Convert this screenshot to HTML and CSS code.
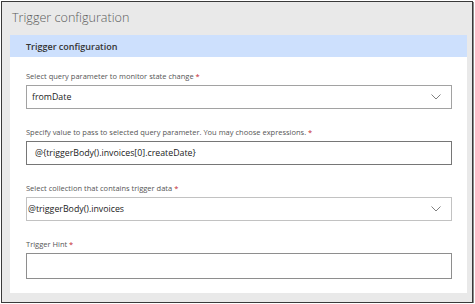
FILE: index.html
```html
<!DOCTYPE html>
<html lang="en">

<head>
  <meta charset="UTF-8" />
  <meta name="viewport" content="width=device-width, initial-scale=1.0" />
  <link rel="stylesheet" href="styles.css">
  <title>Trigger configuration</title>
</head>

<body>
  <div class="frame">
    <div class="frame-title">Trigger configuration</div>

    <div class="panel">
      <div class="panel-header">Trigger configuration</div>

      <div class="panel-body">
        <div class="field">
          <label class="label">Select query parameter to monitor state change <span class="req">*</span></label>
          <div class="input select">
            <span class="value">fromDate</span>
            <svg class="chevron" viewBox="0 0 10 6" width="10" height="6">
              <path d="M0.5 0.5 L5 5 L9.5 0.5" fill="none" stroke="#808080" stroke-width="1"></path>
            </svg>
          </div>
        </div>

        <div class="field">
          <label class="label">Specify value to pass to selected query parameter. You may choose expressions. <span class="req">*</span></label>
          <div class="input active">
            <span class="value expr">@{triggerBody().invoices[0].createDate}</span>
          </div>
        </div>

        <div class="field">
          <label class="label">Select collection that contains trigger data <span class="req">*</span></label>
          <div class="input select light">
            <span class="value">@triggerBody().invoices</span>
            <svg class="chevron" viewBox="0 0 10 6" width="10" height="6">
              <path d="M0.5 0.5 L5 5 L9.5 0.5" fill="none" stroke="#808080" stroke-width="1"></path>
            </svg>
          </div>
        </div>

        <div class="field">
          <label class="label">Trigger Hint <span class="req">*</span></label>
          <div class="input tall"></div>
        </div>
      </div>
    </div>
  </div>
</body>

</html>
```

FILE: styles.css
```css
*,
*::after,
*::before {
  box-sizing: border-box;
  font-family: "Open Sans", "Noto Sans", sans-serif;
}

body {
  margin: 0;
  background-color: white;
}

.frame {
  margin: 1px 0 0 1px;
  width: 472px;
  height: 302px;
  background-color: #e9e9e9;
  border: 1px solid #3a3a3a;
  box-shadow: 1px 1px 0 #8a8a8a;
  display: flex;
  flex-direction: column;
}

.frame-title {
  height: 33px;
  padding: 7px 0 0 10px;
  font-size: 12.6px;
  font-weight: 300;
  color: #5c5c5c;
}

.panel {
  margin: 0 5px 0 8px;
  background-color: white;
}

.panel-header {
  height: 22px;
  padding-left: 16px;
  display: flex;
  align-items: center;
  background-color: #cde0fd;
  font-size: 9px;
  font-weight: 600;
  color: #333;
}

.panel-body {
  padding: 12px 15px 14px 16px;
  display: flex;
  flex-direction: column;
  gap: 16px;
}

.field {
  display: flex;
  flex-direction: column;
  gap: 2px;
}

.label {
  height: 14px;
  line-height: 14px;
  font-size: 7.5px;
  color: #555;
}

.req {
  color: #c4262e;
}

.input {
  height: 24px;
  border: 1px solid #a2a2a2;
  display: flex;
  align-items: center;
  justify-content: space-between;
  padding: 0 10px 0 5px;
  font-size: 8.8px;
  color: #222;
}

.input.active {
  border-color: #767676;
}

.input.light {
  border-color: #c2c2c2;
  padding-left: 1px;
}

.input.tall {
  height: 26px;
  border-color: #8e8e8e;
}

.value.expr {
  padding-left: 3px;
}

.chevron {
  display: block;
}
```
